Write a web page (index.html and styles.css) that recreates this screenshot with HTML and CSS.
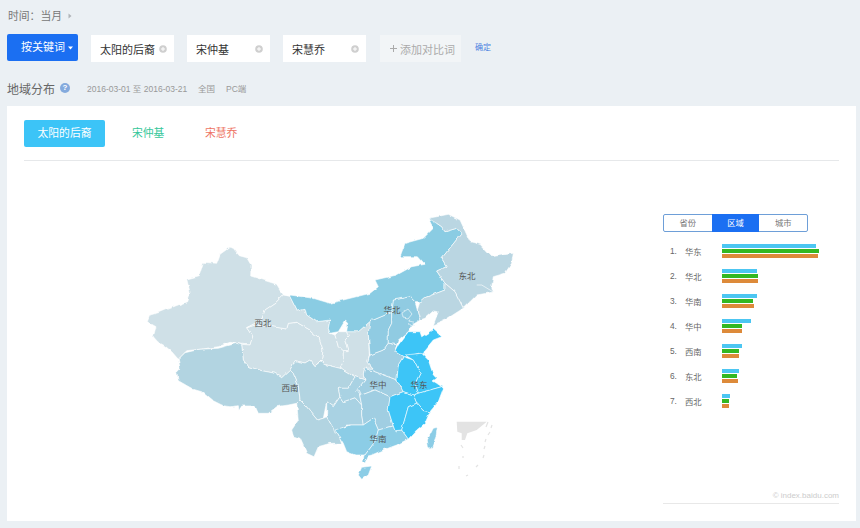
FILE: index.html
```html
<!DOCTYPE html>
<html lang="zh">
<head>
<meta charset="utf-8">
<title>地域分布</title>
<link rel="stylesheet" href="styles.css">
</head>
<body>
<div class="page">
  <div class="time">时间：当月<svg class="time-arrow" width="4" height="6" viewBox="0 0 4 6"><path d="M0.5 0.5L3.5 3L0.5 5.5Z"/></svg></div>
  <div class="toolbar">
    <div class="kw-btn">按关键词<svg class="caret" width="5" height="4" viewBox="0 0 5 4"><path d="M0 0.5H5L2.5 3.5Z"/></svg></div>
    <div class="kw-input"><span>太阳的后裔</span><svg class="plus-dot" width="8" height="8" viewBox="0 0 8 8"><circle cx="4" cy="4" r="3.8"/><path d="M2 4H6M4 2V6"/></svg></div>
    <div class="kw-input"><span>宋仲基</span><svg class="plus-dot" width="8" height="8" viewBox="0 0 8 8"><circle cx="4" cy="4" r="3.8"/><path d="M2 4H6M4 2V6"/></svg></div>
    <div class="kw-input"><span>宋慧乔</span><svg class="plus-dot" width="8" height="8" viewBox="0 0 8 8"><circle cx="4" cy="4" r="3.8"/><path d="M2 4H6M4 2V6"/></svg></div>
    <div class="kw-add"><svg class="add-plus" width="7" height="7" viewBox="0 0 7 7"><path d="M0 3.5H7M3.5 0V7"/></svg>添加对比词</div>
    <a class="confirm">确定</a>
  </div>
  <div class="title-row">
    <h2 class="title">地域分布</h2>
    <span class="help">?</span>
    <span class="meta meta-date">2016-03-01 至 2016-03-21</span>
    <span class="meta meta-area">全国</span>
    <span class="meta meta-dev">PC端</span>
  </div>
  <div class="panel">
    <div class="tabs">
      <div class="tab tab-active">太阳的后裔</div>
      <div class="tab tab-green">宋仲基</div>
      <div class="tab tab-red">宋慧乔</div>
    </div>
    <div class="content">
      <svg class="map" width="380" height="280" viewBox="140 205 380 280">
        <defs>
          <filter id="rough" x="-5%" y="-5%" width="110%" height="110%">
            <feTurbulence type="fractalNoise" baseFrequency="0.13" numOctaves="2" seed="4" result="n"/>
            <feDisplacementMap in="SourceGraphic" in2="n" scale="3.2" xChannelSelector="R" yChannelSelector="G"/>
          </filter>
        </defs>
        <g class="land">
        <g class="prov c-nw">
          <path d="M229.3 247.3L233.3 248.3L239.3 255.7L246.7 257.7L251 265L250.7 276L260 279L276.7 284.3L283.3 295L275 303.3L265 310L261.7 320L246.7 327.7L252.7 336.7L250 345L241.7 344.3L230 342.3L218.3 346.7L201.7 349L186.7 350.7L178.3 359.3L172 352L165 346L158 342L153.3 336.7L156 326.7L147.3 321.7L150 315L158.3 312.7L165 310L186.7 301.7L190 292.3L186.7 279L199.3 275.7L203.3 262.3L216.7 263.3L220 254.3L226 250Z"/>
          <path d="M246.7 327.7L255 325L273 326.7L286.7 329L288.3 323.3L296.7 322.3L310 330L319.3 338L323 350L321.7 360L315 366.7L310 360L305 363L295 360.7L290 370L281.7 377.7L275 373.3L261.7 370.7L248.3 366.7L243.3 360L241.7 344.3L250 345L252.7 336.7Z"/>
          <path d="M283.3 295L290 296.7L296.7 310L305 308.3L306.7 315L316.7 321.7L330 320L328.3 328.3L330 333.3L335 335L338.3 346.7L343.3 351.7L343.3 361.7L340 368.3L326.7 365L321.7 360L323 350L319.3 338L310 330L296.7 322.3L288.3 323.3L286.7 329L273 326.7L255 325L246.7 327.7L261.7 320L265 310L275 303.3Z"/>
          <path d="M335 335L338.3 331.7L346.7 331.7L348.3 336.7L345 340L348.3 351.7L343.3 351.7L338.3 346.7Z"/>
          <path d="M346.7 331.7L358.3 331.7L371.7 320L368.3 333.3L369.3 355L368 362L373.3 368.3L365 368.3L363.3 375L365 380L355 376.7L345 370.7L340 368.3L343.3 361.7L343.3 351.7L348.3 351.7L345 340L348.3 336.7Z"/>
        </g>
        <g class="prov c-sw">
          <path d="M178.3 359.3L185 352.7L200 349.3L218.3 348.3L236.7 343.3L241.7 345L243.3 360L248.3 366.7L261.7 370.7L275 373.3L281.7 377.7L290 370L293.3 373.3L298.3 385L300 400L296.7 403.3L288.3 405L276.7 406.7L268.3 413.3L258.3 413.3L255 406L241.7 406L239 410.7L238.3 405.7L230 406.7L223.3 405.7L211.7 400L201.7 391.7L193.3 389.3L178.3 380.7L176.7 371.7L180 368Z"/>
          <path d="M290 370L295 360.7L305 363L310 360L315 366.7L322.3 360.7L326.7 365L340 368.3L345 370.7L355 376.7L348.3 388.3L338.3 388.3L340 396.7L333.3 406.7L326.7 401.7L323.3 418.3L317.3 420L305 405L300 400L298.3 385L293.3 373.3Z"/>
          <path d="M300 400L305 405L317.3 420L323.3 418.3L326.7 416.7L333.3 428.3L335 430L340 438L341.7 443.3L330 443.3L318.3 446.7L314 456.7L306.7 453.3L300 438.3L293.3 436L291.7 430L298.3 420L296.7 403.3Z"/>
        </g>
        <g class="prov c-sw2">
          <path d="M326.7 416.7L326.7 401.7L333.3 406.7L340 396.7L343.3 401.7L355 397.7L361.7 405L361.7 415L363.3 425L346.7 425L335 433.3L333.3 428.3Z"/>
          <path d="M338.3 388.3L348.3 388.3L355 376.7L365 380L358.3 388.3L361.7 405L355 397.7L343.3 401.7L340 396.7Z"/>
        </g>
        <g class="prov c-cn">
          <path d="M365 368.3L375 371.7L388.3 376.7L397 380L403.3 391.7L390 396.7L375 390L361.7 395L356.7 391.7L358.3 388.3L365 380L363.3 375Z"/>
          <path d="M361.7 395L375 390L390 396.7L388.3 410L393.3 426L378.3 430L373.3 418.3L363.3 425L361.7 415L361.7 405L358.3 388.3Z"/>
          <path d="M370 355L383.3 350L388.3 343L396.7 345L395 351.7L403.3 356.7L398.3 365L397 380L388.3 376.7L375 371.7L365 368.3L373.3 368.3L368 362Z"/>
        </g>
        <g class="prov c-nn">
          <path d="M370 321.7L373.3 320L391.7 312.3L391.7 323.3L388.3 330L388.3 343L383.3 350L370 355L368.3 333.3Z"/>
          <path d="M391.7 312.3L393.3 300L410 296.7L415 301.7L417.3 310L420 320L413.3 324.3L408.3 331.7L398.3 340L396.7 345L388.3 343L388.3 330L391.7 323.3Z"/>
          <path d="M402 313L408 309L412 314L408 319L403 318Z"/>
          <path d="M409 320L413 321L413.3 326L410 325Z"/>
        </g>
        <g class="prov c-s">
          <path d="M335 430L350 425L363.3 425L373.3 418.3L378.3 430L375 441.7L365 455L355 455L346.7 451.7L343.3 443.3Z"/>
          <path d="M378.3 430L393.3 426L395 430.7L401.7 430L408.3 439L396.7 445L383.3 450L371.7 455L368 456L365 463L363 462L364 455L365 455L375 441.7Z"/>
          <path d="M361.7 467.3L371.7 466L368.3 475L361.7 479.3L358.3 475Z"/>
          <path d="M433.3 428.3L437.3 427.3L436 436.7L431 449.3L428.3 446.7L427.3 440Z"/>
        </g>
        <path class="prov c-n" d="M428.3 218.3L435 217.3L436.7 223.3L441.7 226.7L445 231.7L456.7 228.3L461.7 233.3L441.7 258.3L446.7 266.7L436.7 271L445 283.3L445 290L423.3 298.3L420 301.7L415 301.7L410 296.7L393.3 300L391.7 312.3L373.3 320L371.7 320L358.3 331.7L346.7 331.7L347.7 323.3L345 320.7L338.3 331.7L330 333.3L328.3 328.3L330 320L316.7 321.7L306.7 315L305 308.3L296.7 310L290 296.7L290 295L313.3 298.3L330 303.3L350 298.3L370 293.3L378.3 286.7L375 280L396.7 275L411.7 266.7L425 264.3L418.3 256.7L400 256.7L405 243.3L423.3 238.3L433.3 228.3Z"/>
        <g class="prov c-ne">
          <path d="M428.3 218.3L436.7 216.7L448.3 214.3L460 220L470 241.7L480 244.3L491.7 256.7L513.3 253.3L511.7 263.3L505 273.3L493.3 276.7L491.7 286.7L493.3 292L476.7 295L470 301.7L463.3 308.3L458.3 298.3L455 291.7L445 283.3L436.7 271L446.7 266.7L441.7 258.3L461.7 233.3L456.7 228.3L445 231.7L441.7 226.7L436.7 223.3Z"/>
          <path d="M420 301.7L423.3 298.3L445 290L445 283.3L455 291.7L458.3 298.3L463.3 308.3L445 320L433.3 325L438.3 311.7L433.3 311L425 318.3L420 320L417.3 310Z"/>
          <path class="ne-line" d="M476.7 285L481.7 285L493.3 292"/>
        </g>
        <g class="prov c-e">
          <path d="M395 351.7L398.3 345L408.3 331.7L420 331.7L421.7 336.7L433.3 329.3L441.7 336.7L433.3 340L425 350L423.3 354L418.3 353.3L406.7 356.7L403.3 356.7Z"/>
          <path d="M405 355L421.7 353.3L428.3 360L433.3 375L436.7 378.3L433 381L436.7 383.3L441.7 386.7L418.3 393.3L415 383.3L420 373.3L413.3 360Z"/>
          <path d="M398.3 365L403.3 356.7L413.3 360L420 373.3L415 383.3L418.3 393.3L413.3 395L403.3 391.7L397 380Z"/>
          <path d="M418.3 393.3L441.7 386.7L443.3 388.3L438.3 401.7L430 411.7L423.3 410.7L416.7 403.3L413.3 395Z"/>
          <path d="M390 396.7L403.3 391.7L413.3 395L416.7 403.3L408.3 406.7L401.7 430L395 430.7L393.3 426L388.3 410Z"/>
          <path d="M408.3 406.7L416.7 403.3L423.3 410.7L430 411.7L425 423.3L416.7 430L408.3 439L401.7 430Z"/>
        </g>
        </g>
        <path class="sea" d="M456.7 421.7H486.7L476.7 430L467.3 433.3L465 440L461.7 440L461.7 433.3L457.3 431.7Z"/>
        <path class="dash" d="M488 422L486 427M492 425L491 428M490 432L488 435M486 439L485 442M485 446L484 449M484 455L483 458M478 465L476 467M468 475L466 476M459 466L459 469M463 456L463 458M461 445L463 448"/>
        <text class="lbl" x="263" y="326">西北</text>
        <text class="lbl" x="467" y="279">东北</text>
        <text class="lbl" x="392" y="313">华北</text>
        <text class="lbl" x="290" y="391">西南</text>
        <text class="lbl" x="378" y="388">华中</text>
        <text class="lbl" x="419" y="388">华东</text>
        <text class="lbl" x="378" y="442">华南</text>
      </svg>
      <div class="side">
        <div class="seg">
          <div class="seg-item">省份</div>
          <div class="seg-item seg-active">区域</div>
          <div class="seg-item">城市</div>
        </div>
        <div class="rank">
          <div class="row"><span class="no">1.</span><span class="name">华东</span><div class="bars"><i class="bar b1" style="width:94px"></i><i class="bar b2" style="width:97px"></i><i class="bar b3" style="width:96px"></i></div></div>
          <div class="row"><span class="no">2.</span><span class="name">华北</span><div class="bars"><i class="bar b1" style="width:35px"></i><i class="bar b2" style="width:36px"></i><i class="bar b3" style="width:36px"></i></div></div>
          <div class="row"><span class="no">3.</span><span class="name">华南</span><div class="bars"><i class="bar b1" style="width:35px"></i><i class="bar b2" style="width:31px"></i><i class="bar b3" style="width:32px"></i></div></div>
          <div class="row"><span class="no">4.</span><span class="name">华中</span><div class="bars"><i class="bar b1" style="width:29px"></i><i class="bar b2" style="width:20px"></i><i class="bar b3" style="width:20px"></i></div></div>
          <div class="row"><span class="no">5.</span><span class="name">西南</span><div class="bars"><i class="bar b1" style="width:20px"></i><i class="bar b2" style="width:17px"></i><i class="bar b3" style="width:17px"></i></div></div>
          <div class="row"><span class="no">6.</span><span class="name">东北</span><div class="bars"><i class="bar b1" style="width:17px"></i><i class="bar b2" style="width:15px"></i><i class="bar b3" style="width:16px"></i></div></div>
          <div class="row"><span class="no">7.</span><span class="name">西北</span><div class="bars"><i class="bar b1" style="width:8px"></i><i class="bar b2" style="width:7px"></i><i class="bar b3" style="width:7px"></i></div></div>
        </div>
        <div class="credit">© index.baidu.com</div>
      </div>
    </div>
  </div>
</div>
</body>
</html>
```

FILE: styles.css
```css
* { box-sizing: border-box; }
html, body { margin: 0; padding: 0; }
body {
  width: 860px;
  height: 528px;
  overflow: hidden;
  background: #ebf0f4;
  font-family: "Liberation Sans", "Noto Sans CJK SC", sans-serif;
  color: #666;
}
.page { padding: 8px 4px 7px 7px; }

.time {
  height: 16px;
  line-height: 16px;
  padding-left: 1px;
  font-size: 10.8px;
  color: #777;
  display: flex;
  align-items: center;
}
.time-arrow { margin-left: 6px; fill: #b0b4b8; }

.toolbar {
  margin-top: 10px;
  display: flex;
  align-items: flex-start;
  gap: 13px;
  height: 28px;
}
.kw-btn {
  width: 71px;
  height: 27px;
  line-height: 27px;
  padding-left: 14px;
  background: #1b6ff2;
  border-radius: 2px;
  color: #fff;
  font-size: 11px;
  display: flex;
  align-items: center;
}
.caret { margin-left: 3px; fill: #fff; }
.kw-input {
  width: 83px;
  height: 27px;
  margin-top: 1px;
  padding: 0 7px 0 9px;
  background: #fff;
  color: #333;
  font-size: 11px;
  display: flex;
  align-items: center;
  justify-content: space-between;
}
.plus-dot { fill: #cfcfcf; }
.plus-dot path { stroke: #fff; stroke-width: 1; fill: none; }
.kw-add {
  width: 81px;
  height: 27px;
  margin: 1px 0 0 1px;
  padding-left: 10px;
  background: #f2f5f7;
  color: #aaa;
  font-size: 11px;
  display: flex;
  align-items: center;
}
.add-plus { margin-right: 3px; }
.add-plus path { stroke: #aaa; stroke-width: 1; fill: none; }
.confirm {
  margin-left: 1px;
  line-height: 27px;
  font-size: 8px;
  color: #4a7fe0;
}

.title-row {
  margin-top: 18px;
  height: 16px;
  display: flex;
  align-items: center;
}
.title {
  margin: 0;
  font-weight: normal;
  font-size: 12px;
  color: #666;
}
.help {
  margin-left: 5px;
  width: 10px;
  height: 10px;
  line-height: 10px;
  border-radius: 50%;
  background: #84aadd;
  color: #fff;
  font-size: 8px;
  font-weight: bold;
  text-align: center;
}
.meta { font-size: 8.5px; color: #999; white-space: nowrap; }
.meta-date { margin-left: 17px; width: 111px; }
.meta-area { width: 28px; }

.panel {
  margin-top: 10px;
  width: 849px;
  height: 415px;
  padding: 14px 17px 0;
  background: #fff;
}
.tabs {
  display: flex;
  gap: 13.5px;
  padding-bottom: 13px;
  border-bottom: 1px solid #e6e8ea;
}
.tab {
  height: 27px;
  line-height: 27px;
  padding: 0 13.5px;
  font-size: 10.8px;
  border-radius: 2px;
}
.tab-active { background: #3cc4f7; color: #fff; }
.tab-green { color: #35c79a; }
.tab-red { color: #ee7463; }

.content {
  display: flex;
  justify-content: space-between;
  align-items: flex-start;
  padding-left: 116px;
}
.map { display: block; margin-top: 44px; flex: none; }
.land { filter: url(#rough); }
.prov path, path.prov { stroke: #fff; stroke-width: 0.6; stroke-linejoin: round; }
.c-nw path { fill: #cfe0e7; }
.c-sw path { fill: #b2d4e1; }
.c-sw2 path { fill: #a9d2e3; }
.c-cn path { fill: #a0cee2; }
.c-nn path { fill: #90cbe2; }
.c-s path { fill: #8ccde6; }
.c-n { fill: #8accE3; }
.c-ne path { fill: #bad6e2; }
.c-ne .ne-line { fill: none; }
.c-e path { fill: #3cc5f7; }
.sea { fill: #e3e3e3; }
.dash { fill: none; stroke: #e3e3e3; stroke-width: 1.2; }
.lbl {
  font-size: 8.5px;
  fill: #555;
  text-anchor: middle;
}

.side { width: 176px; margin-top: 53px; flex: none; }
.seg {
  width: 145px;
  height: 18px;
  display: flex;
  border: 1px solid #6e9fd8;
  border-radius: 2px;
}
.seg-item {
  flex: 1;
  line-height: 16px;
  text-align: center;
  font-size: 8.3px;
  color: #777;
}
.seg-active { margin: -1px 0; line-height: 18px; background: #1b6ff2; color: #fff; }

.rank {
  margin-top: 12px;
  display: flex;
  flex-direction: column;
  gap: 11px;
}
.row {
  height: 14px;
  display: flex;
  align-items: center;
  padding-left: 7px;
  font-size: 8.3px;
  color: #666;
}
.no { width: 15px; flex: none; white-space: nowrap; }
.name { width: 37px; flex: none; }
.bars { display: flex; flex-direction: column; gap: 1px; }
.bar { display: block; height: 4px; }
.b1 { background: #4cc6f2; }
.b2 { background: #33b822; }
.b3 { background: #dd8a3a; }

.credit {
  margin-top: 82px;
  padding-bottom: 1px;
  border-bottom: 1px solid #e8e8e8;
  text-align: right;
  font-size: 8px;
  line-height: 12px;
  color: #ccc;
}
```
